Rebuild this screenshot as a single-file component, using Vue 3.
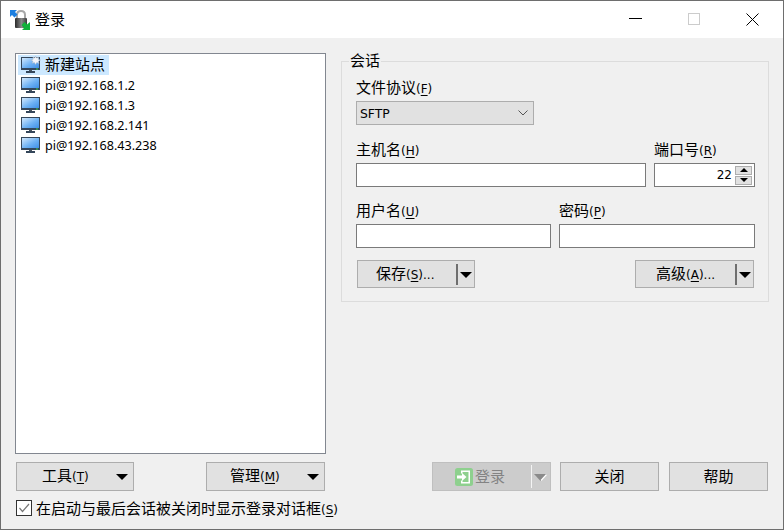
<script setup>
const sites = [
  { name: '新建站点', star: true, cjk: true },
  { name: 'pi@192.168.1.2' },
  { name: 'pi@192.168.1.3' },
  { name: 'pi@192.168.2.141' },
  { name: 'pi@192.168.43.238' },
]
</script>

<template>
  <div class="window">
    <header class="titlebar">
      <svg class="app-icon" width="20" height="20" viewBox="0 0 20 20">
        <defs>
          <linearGradient id="lockBody" x1="0" y1="0" x2="1" y2="0">
            <stop offset="0" stop-color="#2a2a2a" />
            <stop offset="0.55" stop-color="#8a8a8a" />
            <stop offset="1" stop-color="#3a3a3a" />
          </linearGradient>
        </defs>
        <path d="M7 9V5C7 2.8 8.4 1 11 1S15 2.8 15 5V9" fill="none" stroke="#a8a8a8" stroke-width="2" />
        <rect x="5" y="8" width="12" height="10" rx="1" fill="url(#lockBody)" />
        <path d="M0 0H7L5 2L7.5 4.5L4.5 7.5L2 5L0 7Z" fill="#1c7fe0" />
        <path d="M20 20H12L14 18L11.5 15L14.5 12L17 14.5L20 12Z" fill="#12b23a" />
      </svg>
      <span class="title">登录</span>
      <div class="controls">
        <div class="ctl">
          <svg width="13" height="13" viewBox="0 0 13 13"><path d="M0 5.5H13" stroke="#000" stroke-width="1" /></svg>
        </div>
        <div class="ctl">
          <svg width="13" height="13" viewBox="0 0 13 13"><rect x="0.5" y="0.5" width="11" height="11" fill="none" stroke="#cccccc" /></svg>
        </div>
        <div class="ctl">
          <svg width="13" height="13" viewBox="0 0 13 13"><path d="M0.5 0.5L12.5 12.5M12.5 0.5L0.5 12.5" stroke="#000" stroke-width="1" /></svg>
        </div>
      </div>
    </header>

    <main class="body">
      <div class="top">
        <div class="tree">
          <div v-for="s in sites" :key="s.name" class="row">
            <svg class="monitor" width="20" height="18" viewBox="0 0 20 18">
              <defs>
                <linearGradient id="scr" x1="0" y1="0" x2="1" y2="1">
                  <stop offset="0" stop-color="#d2e8fd" />
                  <stop offset="0.55" stop-color="#6fb2f3" />
                  <stop offset="1" stop-color="#3f8fe6" />
                </linearGradient>
              </defs>
              <rect x="0" y="1" width="19" height="13" fill="#34465a" />
              <rect x="1" y="2" width="17" height="10" fill="url(#scr)" />
              <rect x="15" y="12.5" width="2" height="1" fill="#3fd04a" />
              <rect x="8" y="14" width="3" height="1" fill="#4a5560" />
              <rect x="5" y="15" width="9" height="2" fill="#34465a" />
              <path v-if="s.star" d="M14.5 0L15.6 2L17.5 1L17.2 3.2L19.5 4L17.4 5.2L18 7.5L15.8 6.6L14.5 8.5L13.4 6.6L11 7.2L12 5.2L10 4L12.2 3.2L12 1L13.8 2Z" fill="#f4f6fa" stroke="#9fb0c2" stroke-width="0.5" />
            </svg>
            <span :class="s.cjk ? 'row-cjk' : 'row-latin'">{{ s.name }}</span>
          </div>
        </div>

        <fieldset class="group">
          <legend>会话</legend>

          <label class="lbl first">文件协议<span class="k">(<u>F</u>)</span></label>
          <div class="select">
            <span>SFTP</span>
            <svg width="10" height="6" viewBox="0 0 10 6"><path d="M0.5 0.5L5 5L9.5 0.5" fill="none" stroke="#555" /></svg>
          </div>

          <div class="fields host-row">
            <div class="f host">
              <label class="lbl">主机名<span class="k">(<u>H</u>)</span></label>
              <input class="inp" type="text" />
            </div>
            <div class="f port">
              <label class="lbl">端口号<span class="k">(<u>R</u>)</span></label>
              <div class="spin">
                <span class="spin-val">22</span>
                <div class="spin-btns">
                  <div class="sb"><i class="tri up"></i></div>
                  <div class="sb"><i class="tri"></i></div>
                </div>
              </div>
            </div>
          </div>

          <div class="fields user-row">
            <div class="f user">
              <label class="lbl">用户名<span class="k">(<u>U</u>)</span></label>
              <input class="inp" type="text" />
            </div>
            <div class="f pass">
              <label class="lbl">密码<span class="k">(<u>P</u>)</span></label>
              <input class="inp" type="text" />
            </div>
          </div>

          <div class="actions">
            <button class="btn split save">
              <span class="btn-text">保存<span class="k">(<u>S</u>)...</span></span>
              <i class="sep"></i><i class="arrow"></i>
            </button>
            <button class="btn split adv">
              <span class="btn-text">高级<span class="k">(<u>A</u>)...</span></span>
              <i class="sep"></i><i class="arrow"></i>
            </button>
          </div>
        </fieldset>
      </div>

      <div class="bottom">
        <button class="btn menu tool">
          <span class="btn-text">工具<span class="k">(<u>T</u>)</span></span>
          <i class="arrow"></i>
        </button>
        <button class="btn menu manage">
          <span class="btn-text">管理<span class="k">(<u>M</u>)</span></span>
          <i class="arrow"></i>
        </button>
        <button class="btn login">
          <svg width="18" height="18" viewBox="0 0 18 18">
            <rect width="18" height="18" rx="2.5" fill="#8ed08e" />
            <path d="M6 2.5H15V15.5H6V12.5H7.5V14H13.5V4H7.5V5.5H6Z" fill="#fff" />
            <path d="M2 7.5H7V5L11.5 9L7 13V10.5H2Z" fill="#fff" />
          </svg>
          <span class="login-text">登录</span>
          <i class="sep light"></i>
          <svg class="dim-arrow" width="13" height="7" viewBox="0 0 13 7">
            <path d="M0 0H13L6.5 7Z" fill="#8a8a8a" />
            <path d="M12.5 0.5L7 6.5" stroke="#fff" stroke-width="1.2" />
          </svg>
        </button>
        <button class="btn plain close">关闭</button>
        <button class="btn plain help">帮助</button>
      </div>

      <label class="check">
        <span class="box">
          <svg width="14" height="14" viewBox="0 0 14 14"><path d="M2.5 7L5.5 10.5L12 3" fill="none" stroke="#777" stroke-width="1.2" /></svg>
        </span>
        <span class="check-text">在启动与最后会话被关闭时显示登录对话框<span class="k">(<u>S</u>)</span></span>
      </label>
    </main>
  </div>
</template>

<style>
html, body { margin: 0; background: #f0f0f0; }
</style>

<style scoped>
.window {
  width: 784px;
  height: 530px;
  box-sizing: border-box;
  border: 1px solid #6e6e6e;
  background: #f0f0f0;
  display: flex;
  flex-direction: column;
  overflow: hidden;
  font-family: "Noto Sans CJK SC", "Noto Sans", sans-serif;
  font-size: 15px;
  color: #000;
}
.titlebar {
  height: 37px;
  background: #fff;
  display: flex;
  align-items: center;
  padding-left: 9px;
  flex: none;
}
.app-icon { margin-top: 1px; }
.title { margin-left: 5px; line-height: 20px; margin-bottom: 2px; }
.controls { margin-left: auto; display: flex; margin-right: 1px; }
.ctl {
  width: 58.5px;
  height: 37px;
  box-sizing: border-box;
  padding-top: 12px;
  display: flex;
  align-items: flex-start;
  justify-content: center;
}
.k {
  font-family: "DejaVu Sans", sans-serif;
  font-size: 12px;
}
.k u { text-underline-offset: 2px; }

.body { flex: 1; display: flex; flex-direction: column; }
.top { display: flex; padding: 15px 0 0 14px; }

.tree {
  width: 311px;
  height: 401px;
  box-sizing: border-box;
  border: 1px solid #828790;
  background: #fff;
  padding: 1px 0 0 2px;
}
.row {
  height: 20px;
  display: flex;
  align-items: center;
  padding-left: 3px;
  width: fit-content;
  padding-right: 4px;
}
.row:first-child { background: #cce8ff; }
.monitor { flex: none; }
.row-cjk { margin-left: 4px; line-height: 20px; margin-bottom: 2px; }
.row-latin {
  margin-left: 4px;
  font-family: "Noto Sans", sans-serif;
  font-size: 12.6px;
  line-height: 20px;
  margin-top: 1px;
}

.group {
  width: 428px;
  height: 249px;
  box-sizing: border-box;
  margin: 0 0 0 15px;
  padding: 0 13px 0 14px;
  border: 1px solid #dcdcdc;
  min-width: 0;
}
.group legend {
  padding: 0 1px 2px;
  margin-left: -7px;
  line-height: 14px;
  font-size: 15px;
}
.lbl {
  display: block;
  line-height: 16px;
  height: 18px;
}
.lbl.first { margin-top: 10px; }
.select {
  margin-top: 4px;
  width: 178px;
  height: 24px;
  box-sizing: border-box;
  border: 1px solid #adadad;
  background: #e1e1e1;
  display: flex;
  align-items: center;
  justify-content: space-between;
  padding: 0 5px 0 3px;
  font-family: "DejaVu Sans", sans-serif;
  font-size: 12.4px;
}
.fields { display: flex; }
.host-row { margin-top: 16px; }
.user-row { margin-top: 15px; }
.f .lbl { margin-bottom: 4px; }
.host { width: 290px; }
.port { width: 101px; margin-left: 8px; }
.user { width: 195px; }
.pass { width: 196px; margin-left: 8px; }
.inp {
  display: block;
  width: 100%;
  height: 24px;
  box-sizing: border-box;
  border: 1px solid #7a7a7a;
  background: #fff;
  padding: 0;
  margin: 0;
  outline: none;
}
.spin {
  height: 24px;
  box-sizing: border-box;
  border: 1px solid #7a7a7a;
  background: #fff;
  display: flex;
  align-items: center;
  justify-content: flex-end;
  padding-right: 2px;
}
.spin-val {
  font-family: "DejaVu Sans", sans-serif;
  font-size: 12px;
  margin-right: 3px;
}
.spin-btns { display: flex; flex-direction: column; gap: 1px; }
.sb {
  width: 17px;
  height: 9px;
  box-sizing: border-box;
  border: 1px solid #adadad;
  background: #e1e1e1;
  display: flex;
  align-items: center;
  justify-content: center;
}
.tri {
  display: block;
  width: 0;
  height: 0;
  border-left: 4px solid transparent;
  border-right: 4px solid transparent;
  border-top: 4px solid #000;
}
.tri.up { border-top: 0; border-bottom: 4px solid #000; }

.btn {
  box-sizing: border-box;
  border: 1px solid #adadad;
  background: #e1e1e1;
  margin: 0;
  padding: 0;
  font: inherit;
  color: #000;
  display: flex;
  align-items: center;
  flex: none;
}
.actions {
  display: flex;
  justify-content: space-between;
  margin-top: 12px;
  padding: 0 1px;
}
.split { width: 118px; height: 28px; }
.adv { width: 119px; }
.btn-text { line-height: 20px; margin-bottom: 2px; }
.split .btn-text { margin-left: 18px; margin-bottom: 0; }
.adv.split .btn-text { margin-left: 20px; }
.sep {
  display: block;
  width: 2px;
  height: 21px;
  background: #6e6e6e;
  margin-left: auto;
}
.arrow {
  display: block;
  width: 0;
  height: 0;
  border-left: 6px solid transparent;
  border-right: 6px solid transparent;
  border-top: 6px solid #000;
  margin: 1px 2px 0 2px;
}

.bottom {
  display: flex;
  padding-left: 15px;
  margin-top: 8px;
  height: 29px;
}
.menu { height: 29px; }
.tool { width: 118px; }
.tool .btn-text { margin-left: 25px; }
.manage { width: 119px; margin-left: 72px; }
.manage .btn-text { margin-left: 23px; }
.menu .arrow { margin: 1px 5px 0 auto; }
.login {
  width: 119px;
  height: 29px;
  margin-left: 107px;
  background: #cccccc;
  border-color: #bfbfbf;
  padding-left: 22px;
}
.login-text { color: #838383; margin-left: 2px; line-height: 20px; margin-bottom: 2px; }
.sep.light { background: #f4f4f4; width: 1px; height: 23px; }
.dim-arrow { margin: 1px 3px 0 2px; flex: none; }
.plain {
  width: 99px;
  height: 29px;
  justify-content: center;
  padding-bottom: 2px;
}
.close { margin-left: 9px; }
.help { margin-left: 10px; }

.check {
  display: flex;
  align-items: center;
  margin: 8px 0 0 15px;
  height: 18px;
}
.check-text { margin-bottom: 2px; }
.box {
  width: 16px;
  height: 16px;
  box-sizing: border-box;
  border: 1px solid #333;
  background: #fff;
  display: flex;
  align-items: center;
  justify-content: center;
  margin-right: 4px;
}
</style>
